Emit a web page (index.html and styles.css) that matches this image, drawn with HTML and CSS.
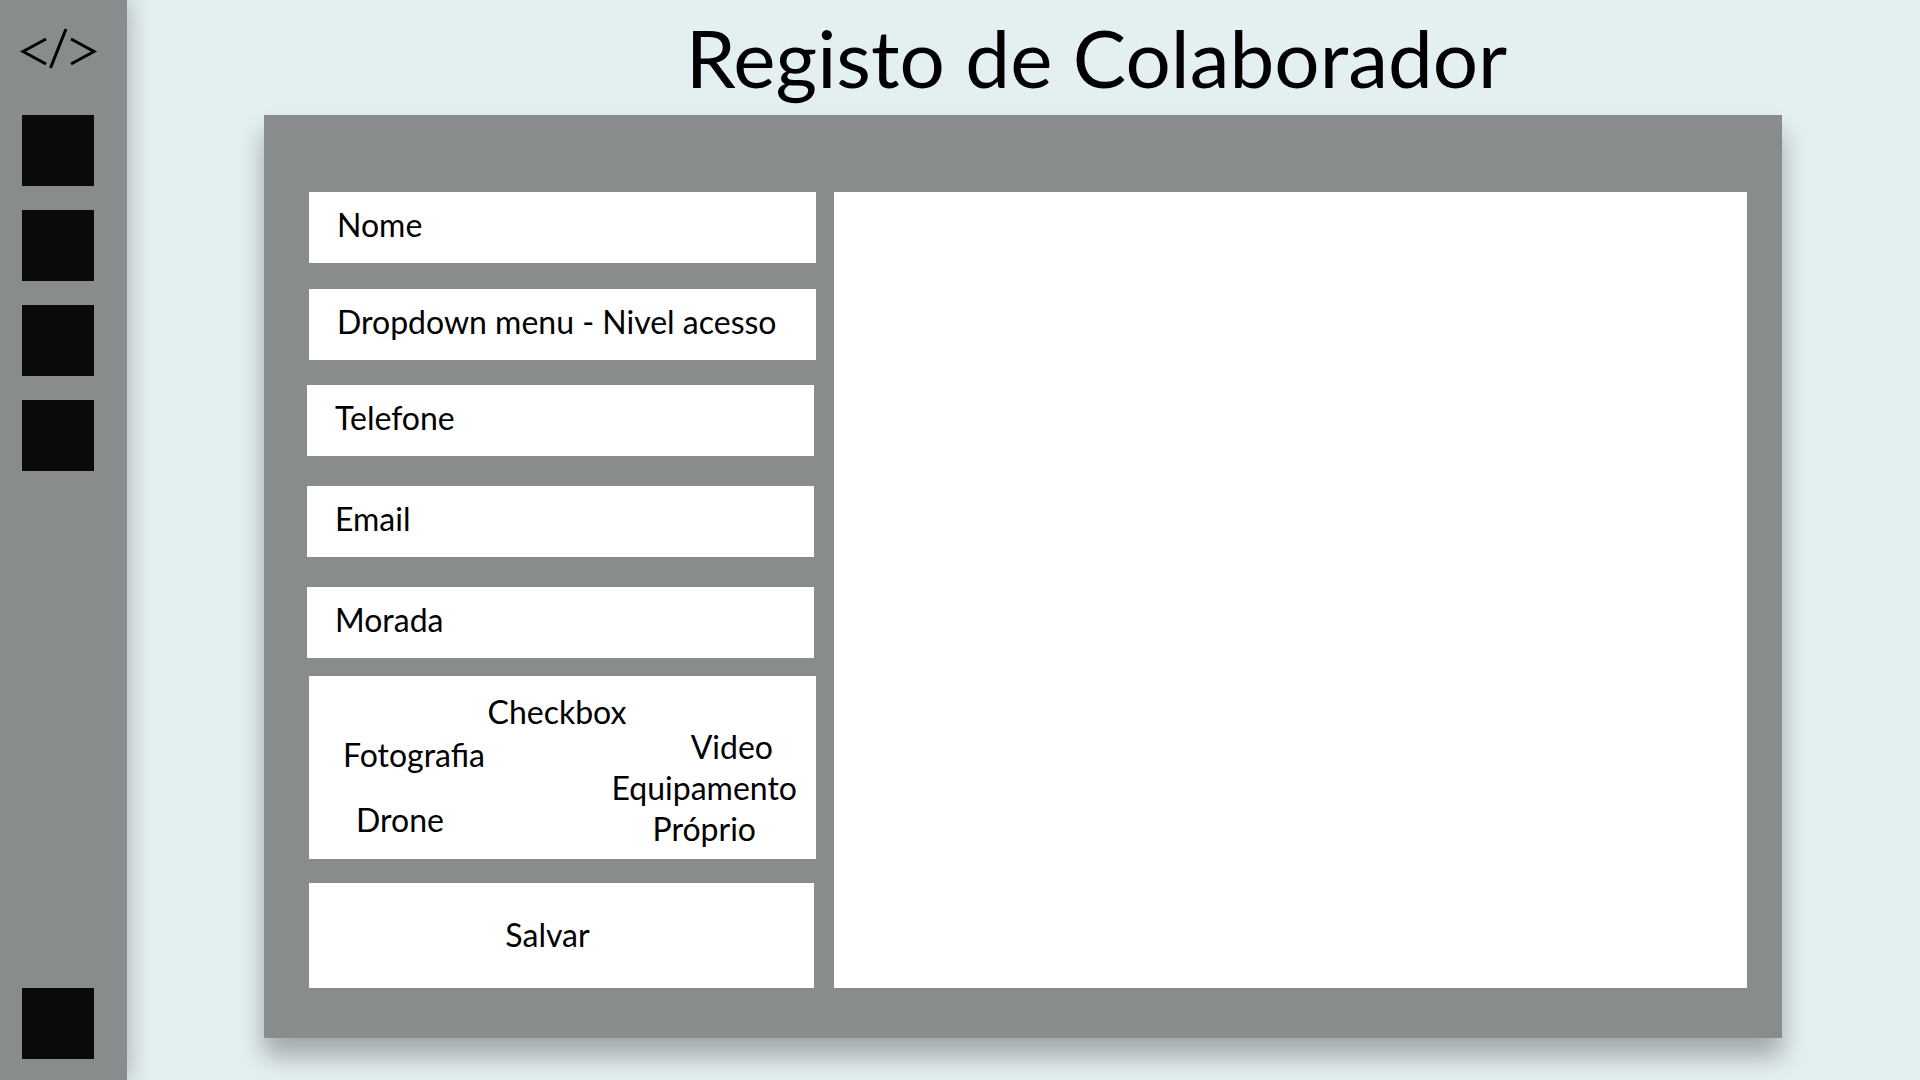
FILE: index.html
```html
<!DOCTYPE html>
<html lang="pt">
<head>
  <meta charset="utf-8">
  <meta name="viewport" content="width=device-width, initial-scale=1">
  <title>Registo de Colaborador</title>
  <link rel="stylesheet" href="styles.css">
</head>
<body class="app">
  <nav class="sidebar" aria-label="Principal">
    <a class="logo" href="#" aria-label="Início">
      <svg class="logo-icon" viewBox="0 0 80 44" fill="none" stroke="currentColor" stroke-width="3">
        <path d="M26 12 L3 24.500 L26 37"/>
        <path d="M46 2 L30.500 41"/>
        <path d="M51 12 L74 24.500 L51 37"/>
      </svg>
    </a>
    <a class="nav-item" href="#" aria-label="Menu 1"></a>
    <a class="nav-item" href="#" aria-label="Menu 2"></a>
    <a class="nav-item" href="#" aria-label="Menu 3"></a>
    <a class="nav-item" href="#" aria-label="Menu 4"></a>
    <a class="nav-item nav-item-last" href="#" aria-label="Menu 5"></a>
  </nav>
  <main class="content">
    <h1 class="title">Registo de Colaborador</h1>
    <section class="panel">
      <form class="form">
        <div class="group group-profile">
          <input class="field" type="text" placeholder="Nome" aria-label="Nome">
          <select class="field" aria-label="Nivel acesso">
            <option>Dropdown menu - Nivel acesso</option>
          </select>
        </div>
        <div class="group group-contact">
          <input class="field" type="tel" placeholder="Telefone" aria-label="Telefone">
          <input class="field" type="email" placeholder="Email" aria-label="Email">
          <input class="field" type="text" placeholder="Morada" aria-label="Morada">
        </div>
        <div class="skills" role="group" aria-labelledby="skills-title">
          <div class="skills-title" id="skills-title">Checkbox</div>
          <div class="skills-columns">
            <div class="skills-left">
              <label class="skill"><input class="check" type="checkbox">Fotografia</label>
              <label class="skill skill-drone"><input class="check" type="checkbox">Drone</label>
            </div>
            <div class="skills-right">
              <label class="skill skill-video"><input class="check" type="checkbox">Video</label>
              <label class="skill"><input class="check" type="checkbox">Equipamento<br>Próprio</label>
            </div>
          </div>
        </div>
        <button class="save" type="submit">Salvar</button>
      </form>
      <div class="preview"></div>
    </section>
  </main>
</body>
</html>
```
FILE: styles.css
```css
* {
  box-sizing: border-box;
}

.app {
  display: flex;
  min-height: 100vh;
  margin: 0;
  background: #e4eff1;
  color: #000;
  font-family: Lato, "Noto Sans", sans-serif;
  font-size: 32px;
  line-height: 41px;
}

.sidebar {
  display: flex;
  flex: none;
  flex-direction: column;
  align-items: flex-start;
  gap: 24px;
  width: 127px;
  padding: 27px 0 21px 22px;
  background: #888c8c;
  box-shadow: 0 0 24px rgba(0, 0, 0, 0.3);
}

.logo {
  height: 64px;
  margin-left: -2px;
  color: #000;
}

.logo-icon {
  display: block;
  width: 80px;
  height: 44px;
}

.nav-item {
  width: 72px;
  height: 71px;
  background: #0a0a0a;
}

.nav-item-last {
  margin-top: auto;
}

.content {
  flex: 1;
  min-width: 0;
}

.title {
  margin: 0;
  padding-left: 146px;
  font-size: 80px;
  font-weight: 400;
  line-height: 115px;
  text-align: center;
}

.panel {
  display: grid;
  grid-template-columns: 509fr 913fr;
  gap: 18px;
  margin: 0 138px 42px 137px;
  padding: 77px 35px 50px 43px;
  background: #888c8c;
  box-shadow: 0 18px 24px rgba(0, 0, 0, 0.3);
}

.form {
  display: flex;
  flex-direction: column;
  min-width: 0;
}

.group {
  display: flex;
  flex-direction: column;
}

.group-profile {
  gap: 26px;
  margin: 0 0 25px 2px;
}

.group-contact {
  gap: 30px;
  margin: 0 2px 18px 0;
}

.field {
  width: 100%;
  height: 71px;
  padding: 0 28px 6px;
  border: 0;
  border-radius: 0;
  background: #fff;
  color: #000;
  font: inherit;
  appearance: none;
}

.field::placeholder {
  color: #000;
  opacity: 1;
}

.skills {
  min-height: 183px;
  margin: 0 0 24px 2px;
  padding: 22px 19px 0 34px;
  background: #fff;
}

.skills-title {
  padding-right: 26px;
  line-height: 28px;
  text-align: center;
}

.skills-columns {
  display: flex;
  justify-content: space-between;
}

.skills-left {
  display: flex;
  flex-direction: column;
  gap: 24px;
  padding-top: 8px;
}

.skills-right {
  display: flex;
  flex-direction: column;
  text-align: center;
}

.skill-drone {
  padding-left: 13px;
}

.skill-video {
  align-self: flex-end;
  padding-right: 24px;
}

.check {
  position: absolute;
  width: 1px;
  height: 1px;
  margin: 0;
  opacity: 0;
}

.save {
  height: 105px;
  margin: 0 2px;
  padding: 0 28px 2px 0;
  border: 0;
  background: #fff;
  color: #000;
  font: inherit;
}

.preview {
  background: #fff;
}
```
